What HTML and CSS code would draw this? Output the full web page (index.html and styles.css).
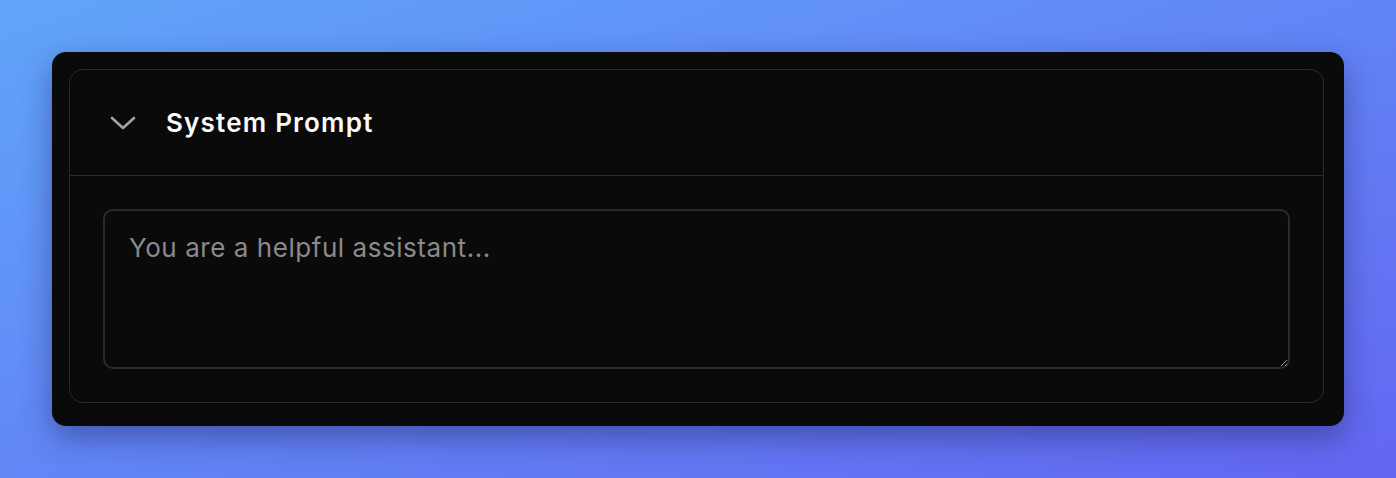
FILE: index.html
```html
<!DOCTYPE html>
<html lang="en">
<head>
  <meta charset="UTF-8">
  <meta name="viewport" content="width=device-width, initial-scale=1.0">
  <title>System Prompt</title>
  <link rel="stylesheet" href="styles.css">
</head>
<body>
  <div class="card">
    <div class="panel">
      <div class="panel-header">
        <svg class="chevron" width="26" height="16" viewBox="0 0 26 16">
          <path d="M2 3 L13 13 L24 3" fill="none" stroke="#a3a3a3" stroke-width="2.6" stroke-linecap="round" stroke-linejoin="round"/>
        </svg>
        <h2 class="panel-title">System Prompt</h2>
      </div>
      <div class="panel-body">
        <textarea class="prompt" placeholder="You are a helpful assistant..."></textarea>
      </div>
    </div>
  </div>
</body>
</html>
```

FILE: styles.css
```css
html, body {
  margin: 0;
  height: 100%;
}

body {
  font-family: Inter, "Noto Sans", sans-serif;
  background: linear-gradient(160deg, #60a5fa 0%, #6366f1 100%);
  padding: 52px;
  box-sizing: border-box;
}

.card {
  background-color: #0a0a0a;
  border-radius: 14px;
  padding: 17px 20px 23px 17px;
  box-shadow: 0 12px 30px rgba(30, 30, 90, 0.45);
}

.panel {
  border: 1px solid #2b2b2b;
  border-radius: 14px;
}

.panel-header {
  display: flex;
  align-items: center;
  height: 105px;
  padding-left: 40px;
  border-bottom: 1px solid #2b2b2b;
}

.chevron {
  margin-right: 30px;
}

.panel-title {
  margin: 0;
  color: #fafafa;
  font-size: 26px;
  font-weight: 600;
  letter-spacing: 1.2px;
}

.panel-body {
  padding: 33px;
}

.prompt {
  display: block;
  width: 100%;
  height: 160px;
  box-sizing: border-box;
  background-color: #0a0a0a;
  border: 2px solid #2b2b2b;
  border-radius: 10px;
  padding: 21px 24px;
  font-family: Inter, "Noto Sans", sans-serif;
  font-size: 26px;
  letter-spacing: 0.55px;
  color: #fafafa;
  outline: none;
}

.prompt::placeholder {
  color: #8a8a8a;
}
```
